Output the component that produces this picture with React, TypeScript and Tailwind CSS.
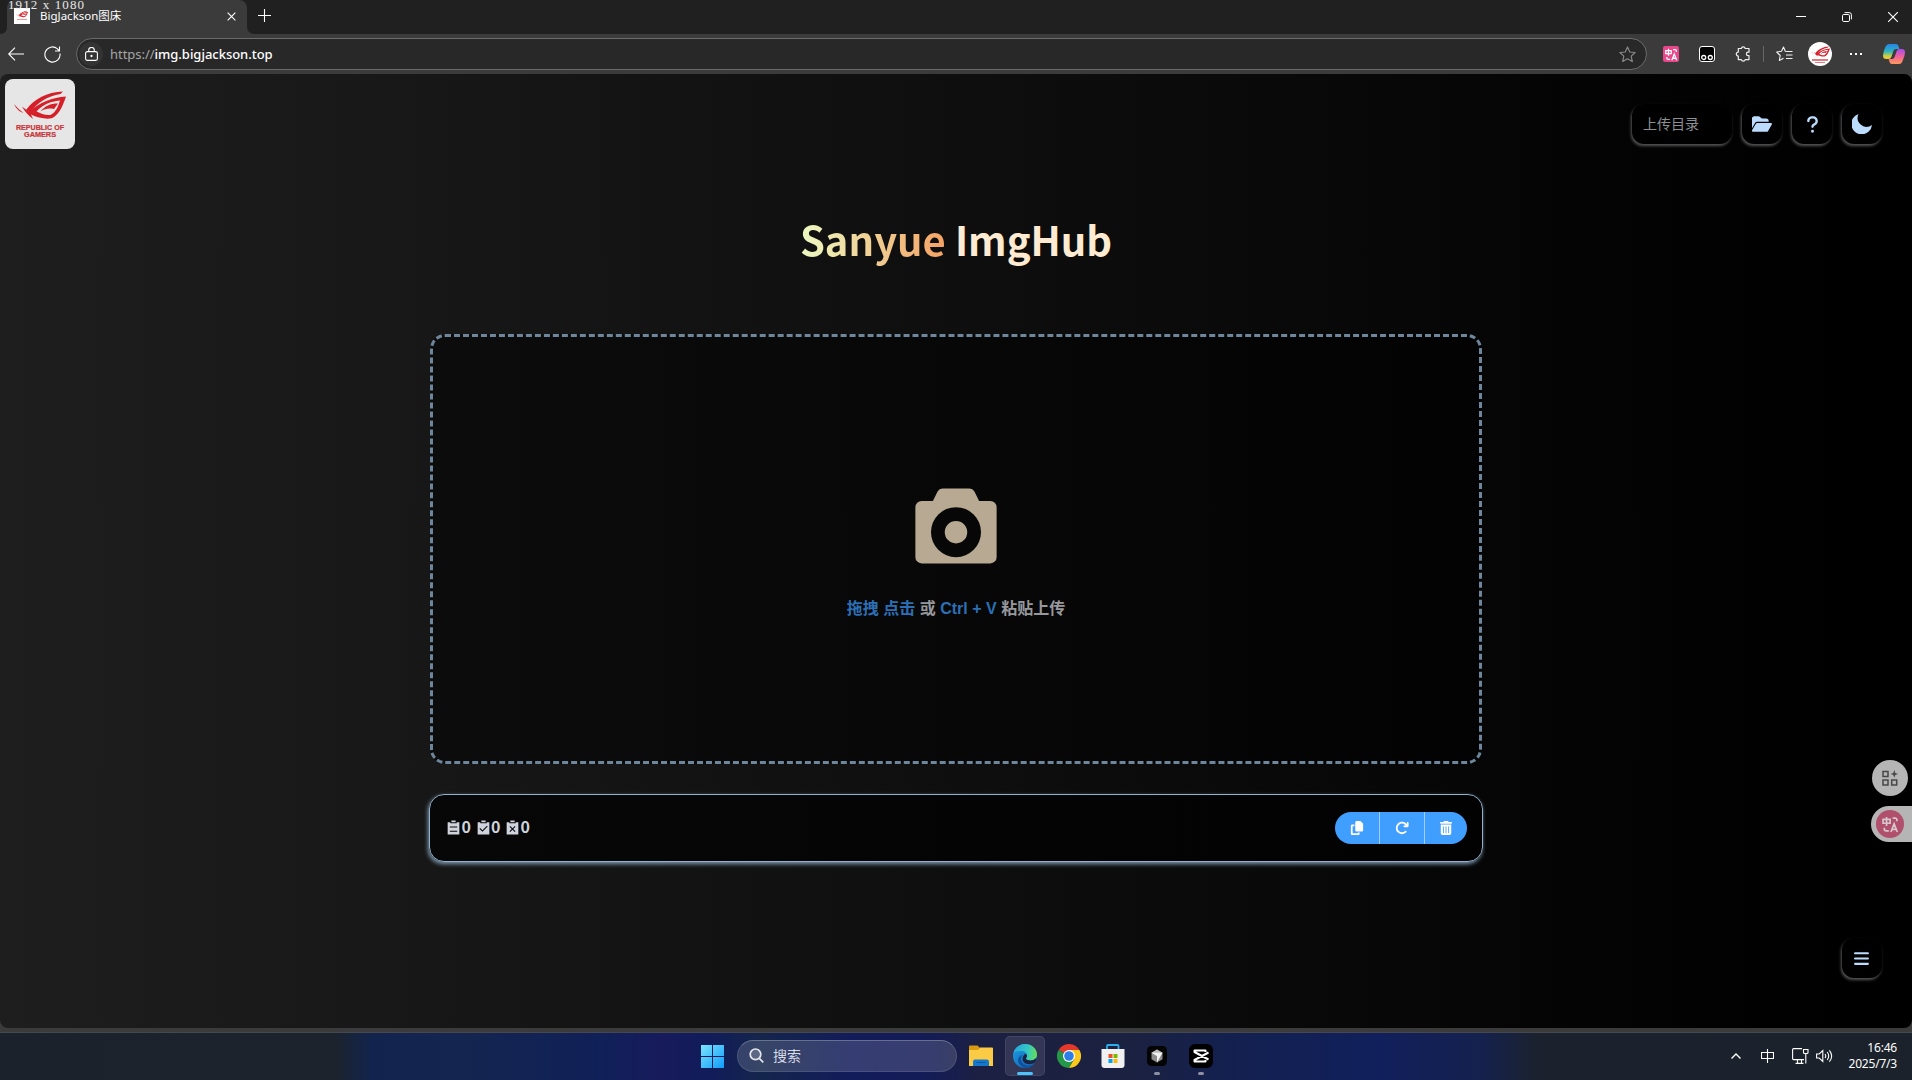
import React from "react";
import { FaCopy, FaArrowRotateRight, FaTrashCan, FaFolderOpen, FaQuestion, FaBars } from "react-icons/fa6";

type IconProps = { className?: string };

function RogEye({ className }: IconProps) {
  return (
    <svg viewBox="0 0 52 28" className={className} fill="#d5202a">
      <path d="M49 0.500C33 1 20 8 12 19L16 22C23 12 33 5 46.500 3Z" />
      <path fillRule="evenodd" d="M52 5.500C38 6.500 26 11 15 21L8 15.500Q12 23 19 28L17 23.500C24 27 36 29.500 40 26C46 22 49 14 52 5.500ZM46 9.500C44 16 42 21 36.500 24C31 24.500 27 22.500 22.500 20.500C29 13.500 36 10.500 46 9.500Z" />
      <path d="M44 12.500C36 12.500 31 15 26.500 20.500C31 17.500 35 17 40 18Z" />
      <path d="M0 13Q3 20 9.500 22Q4 18 0 13Z" />
    </svg>
  );
}

function RogBadge() {
  return (
    <div className="flex size-[70px] flex-col items-center rounded-lg bg-[#e6e6e6] pt-3">
      <RogEye className="h-7 w-[52px]" />
      <svg viewBox="0 0 50 14" className="mt-1.5 h-3.5 w-[50px]" fill="#c9343a" stroke="#c9343a" strokeWidth=".2" fontFamily="Liberation Sans" fontWeight="700" fontSize="6.6">
        <text x="1" y="5.4" textLength="48" lengthAdjust="spacingAndGlyphs">REPUBLIC OF</text>
        <text x="9" y="11.6" textLength="32" lengthAdjust="spacingAndGlyphs">GAMERS</text>
      </svg>
    </div>
  );
}

function TranslateGlyph({ className }: IconProps) {
  return (
    <svg viewBox="0 0 16 16" className={className} fill="none" stroke="currentColor" strokeWidth="1.6">
      <path d="M1 3.2h6.6v3.6H1zM4.3 1v8.4M10 2h2.6q1.4 0 1.4 1.6V5M2.2 11v1.2q0 1.8 1.8 1.8h2.4M8.4 15l3-7.6 3 7.6M9.4 12.6h4" />
    </svg>
  );
}

function TabStrip() {
  return (
    <div className="flex h-[34px] bg-[#202020] text-white">
      <div className="relative ml-[7px] flex w-60 items-center rounded-t-lg bg-[#3b3b3b] pr-[11px] pl-[7px]">
        <span className="absolute -top-[2px] left-[1px] font-['Liberation_Serif',serif] text-[13px] leading-[13px] tracking-[1.1px] whitespace-pre text-[#e8e8e8]">1912 x 1080</span>
        <span className="mt-[-2px] flex size-4 flex-col items-center bg-white pt-[2px]">
          <RogEye className="h-[8px] w-3" />
          <span className="mt-[1px] h-px w-2.5 bg-[#e79a9a]" />
        </span>
        <span className="mt-[-3px] ml-[10px] text-[11.5px]">BigJackson图床</span>
        <svg viewBox="0 0 10 10" className="mt-[-1px] ml-auto size-[9px] text-white" stroke="currentColor" strokeWidth="1.2">
          <path d="M.7.7l8.6 8.6M9.3.7L.7 9.3" />
        </svg>
        <svg viewBox="0 0 8 8" className="absolute -left-[7px] bottom-0 size-[7px]" fill="#3b3b3b"><path d="M8 0v8H0Q8 8 8 0Z" /></svg>
        <svg viewBox="0 0 8 8" className="absolute -right-2 bottom-0 size-2" fill="#3b3b3b"><path d="M0 0v8h8Q0 8 0 0Z" /></svg>
      </div>
      <svg viewBox="0 0 13 13" className="mt-[9px] ml-[11px] size-[13px]" stroke="#fff" strokeWidth="1.1"><path d="M6.500 0v13M0 6.500h13" /></svg>
      <div className="ml-auto flex items-center gap-9 pr-[14px]">
        <svg viewBox="0 0 10 10" className="size-[10px]" stroke="#fff"><path d="M0 4.5h10" /></svg>
        <svg viewBox="0 0 10 10" className="size-[10px]" fill="none" stroke="#fff"><rect x=".5" y="2.5" width="7" height="7" rx="1.3" /><path d="M2.6.6h4.6q2.2 0 2.2 2.2v4.6" /></svg>
        <svg viewBox="0 0 10 10" className="size-[10px]" stroke="#fff" strokeWidth="1.1"><path d="M0 0l10 10M10 0L0 10" /></svg>
      </div>
    </div>
  );
}

function Copilot() {
  return (
    <svg viewBox="0 0 22 20" className="h-5 w-[22px]">
      <defs>
        <linearGradient id="cpA" x1="0" y1="0" x2="0" y2="1"><stop stopColor="#2483e8" /><stop offset=".5" stopColor="#2fb4c0" /><stop offset=".8" stopColor="#c9d043" /><stop offset="1" stopColor="#f6c52f" /></linearGradient>
        <linearGradient id="cpB" x1="0" y1="0" x2="0" y2="1"><stop stopColor="#a64df0" /><stop offset=".5" stopColor="#f0609c" /><stop offset="1" stopColor="#ff9a57" /></linearGradient>
      </defs>
      <path d="M6 0h7q2 0 2.5 2l.8 3H13q-2 0-2.6 2L8.300 13q-.7 2-2.600 2H3q-3 0-3-3.500Q0 8 2.600 2.600 3.700 0 6 0Z" fill="url(#cpA)" />
      <path d="M16 20H9q-2 0-2.500-2l-.8-3H9q2 0 2.600-2L13.700 7q.7-2 2.600-2H19q3 0 3 3.500 0 3.500-2.600 8.900Q18.300 20 16 20Z" fill="url(#cpB)" />
    </svg>
  );
}

function Toolbar() {
  return (
    <div className="flex h-10 items-center bg-[#3b3b3b] text-white">
      <svg viewBox="0 0 16 14" className="mt-[-1px] ml-2 h-[14px] w-4" fill="none" stroke="#fff" strokeWidth="1.1"><path d="M16 7H.8M7 .6L.7 7 7 13.400" /></svg>
      <svg viewBox="0 0 17 17" className="ml-5 size-[17px]" fill="none" stroke="#fff" strokeWidth="1.1"><path d="M16 7.500A7.600 7.600 0 1 1 13.200 2.600L15.500 5M15.500 .5V5H11" /></svg>
      <div className="ml-[15px] flex h-8 w-[1571px] items-center rounded-full border border-[#6b6b6b] bg-[#282828] pr-[10px] pl-[2px]">
        <span className="flex size-6 items-center justify-center rounded-full bg-[#333]">
          <svg viewBox="0 0 13 14" className="h-[14px] w-[13px]" fill="none" stroke="#fff" strokeWidth="1.100"><rect x=".6" y="4.600" width="11.800" height="8.800" rx="1.600" /><path d="M3.700 4.600V3.200a2.800 2.700 0 0 1 5.600 0v1.400" /><circle cx="6.500" cy="9" r=".6" fill="#fff" /></svg>
        </span>
        <span className="mt-px ml-[7px] text-[13px] font-medium tracking-[-0.030px] text-white"><span className="font-normal text-[#a5a5a5]">https://</span>img.bigjackson.top</span>
        <svg viewBox="0 0 18 18" className="ml-auto size-[17px]" fill="none" stroke="#8a8a8a" strokeWidth="1.200" strokeLinejoin="round"><path d="M9 1l2.400 5.300 5.700.6-4.200 3.900 1.200 5.700L9 13.600l-5.100 2.900 1.200-5.700L.9 6.900l5.700-.6Z" /></svg>
      </div>
      <span className="ml-4 flex size-4 items-center justify-center rounded-xs bg-[#e8478b]"><TranslateGlyph className="size-[13px]" /></span>
      <svg viewBox="0 0 16 16" className="ml-5 size-4"><rect x=".5" y=".5" width="15" height="15" rx="2.500" fill="#000" stroke="#fff" /><circle cx="4.700" cy="11.500" r="2" fill="none" stroke="#fff" strokeWidth="1.300" /><circle cx="11.300" cy="11.500" r="2" fill="none" stroke="#fff" strokeWidth="1.300" /></svg>
      <svg viewBox="0 0 16 16" className="ml-5 size-4" fill="none" stroke="#f0f0f0" strokeWidth="1.200" strokeLinejoin="round"><path d="M3.300 2.500h3A2 2 0 0 1 10.200 2.500h3.800v3.700h-.9a1.700 1.700 0 0 0 0 3.400h.9v4H10.200a2 2 0 0 1-3.900 0H3.300v-3.500a2 2 0 0 1 0-4Z" /></svg>
      <span className="ml-[12px] h-4 w-px bg-[#666]" />
      <svg viewBox="0 0 17 16" className="ml-3 h-4 w-[17px]" fill="none" stroke="#f0f0f0" strokeWidth="1.100" strokeLinejoin="round"><path d="M10.500 5.500L9.300 5.300 7.500 1 5.500 5.300.7 6l3.500 3.500-.9 5 4.200-2.300M10.500 5.500h6M10 9h6.500M10 12.500h6.500" /></svg>
      <span className="ml-[15px] flex size-6 flex-col items-center rounded-full bg-white pt-1"><RogEye className="h-[11px] w-[19px]" /><span className="mt-[2px] h-[2px] w-4 bg-[#e37a80]" /><span className="mt-px h-px w-2.5 bg-[#e37a80]" /></span>
      <span className="ml-[18px] flex gap-[3px]"><i className="size-[2px] bg-white" /><i className="size-[2px] bg-white" /><i className="size-[2px] bg-white" /></span>
      <span className="ml-[21px]"><Copilot /></span>
    </div>
  );
}

function GlowButton({ children }: { children: React.ReactNode }) {
  return <button className="flex size-10 items-center justify-center rounded-xl bg-black text-[#bcdcfd] shadow-[-1px_2px_3px_#555]">{children}</button>;
}

const stats = [
  "M704 192h160v736H160V192h160v64h384v-64zM288 512h448v-64H288v64zm0 256h448v-64H288v64zm96-576V96h256v96H384z",
  "M704 192h160v736H160V192h160.064v64H704v-64zM311.616 537.28l-45.312 45.248L447.36 763.52l316.8-316.8-45.312-45.184L447.36 673.024 311.616 537.28zM384 192V96h256v96H384z",
  "m557.248 608 135.744-135.744-45.248-45.248-135.68 135.744-135.808-135.68-45.248 45.184L466.752 608l-135.68 135.68 45.184 45.312L512 653.248l135.744 135.744 45.248-45.248L557.312 608zM704 192h160v736H160V192h160v64h384v-64zm-320 0V96h256v96H384z",
];

function Page() {
  return (
    <div className="bg-[#3b3b3b]">
      <main className="relative h-[954px] overflow-hidden rounded-lg bg-[linear-gradient(90deg,#1e1e1e,#000_96%)]">
        <header className="flex h-[126px] items-start justify-between pt-[5px] pr-[30px] pl-[5px]">
          <RogBadge />
          <div className="mt-[25px] flex gap-[10px]">
            <div className="flex h-10 w-[100px] items-center rounded-xl bg-black pb-[2px] pl-[11px] text-[14px] text-[#8d9095] shadow-[-1px_2px_3px_#555]">上传目录</div>
            <GlowButton><FaFolderOpen className="size-5" /></GlowButton>
            <GlowButton><FaQuestion className="size-[19px]" /></GlowButton>
            <GlowButton><svg viewBox="0 0 20 20" className="size-5" fill="currentColor"><path d="M6.500 0A10.400 10.400 0 1 0 20 11 9 9 0 0 1 6.500 0Z" /></svg></GlowButton>
          </div>
        </header>
        <h1 className="h-[134px] pt-[7px] text-center font-['Noto_Sans_CJK_SC',sans-serif] text-[40px] leading-[64px] font-bold text-[#ffebd2]">
          <span className="bg-[linear-gradient(90deg,#ecfac2,#f5a263)] bg-clip-text text-transparent">Sanyue</span> ImgHub
        </h1>
        <section className="mx-auto flex h-[430px] w-[1052px] flex-col items-center rounded-[15px] border-[3px] border-dashed border-[#6d869c] bg-black/45 pt-[142px]">
          <svg viewBox="0 0 1024 1024" className="size-[100px]" fill="#b8a993"><path d="M160 224a64 64 0 0 0-64 64v512a64 64 0 0 0 64 64h704a64 64 0 0 0 64-64V288a64 64 0 0 0-64-64H748.416l-46.464-92.672A64 64 0 0 0 644.736 96H379.328a64 64 0 0 0-57.216 35.392L275.776 224H160zm352 435.2a115.2 115.2 0 1 0 0-230.4 115.2 115.2 0 0 0 0 230.4zm0 140.8a256 256 0 1 1 0-512 256 256 0 0 1 0 512z" /></svg>
          <p className="mt-[18px] font-['Liberation_Sans','Noto_Sans_CJK_SC',sans-serif] text-[16px] leading-6 font-bold text-[#97989d]"><span className="text-[#2c6fb5]">拖拽 点击</span> 或 <span className="text-[#2c6fb5]">Ctrl + V</span> 粘贴上传</p>
        </section>
        <section className="mx-auto mt-[30px] flex h-[68px] w-[1054px] items-center justify-between rounded-[15px] border border-[#93b1cb] bg-[linear-gradient(90deg,#070707,#020202)] pr-[15px] pl-[15px] shadow-[-1px_2px_4px_#7f9ab2]">
          <div className="flex gap-[3px] pb-[2px] font-['Noto_Sans_CJK_SC',sans-serif] text-[16px] leading-5 font-bold text-[#cfd3dc]">
            {stats.map((d) => (
              <span key={d} className="flex w-[26.500px] items-center"><svg viewBox="0 0 1024 1024" className="size-[17px] shrink-0" fill="currentColor"><path d={d} /></svg><span className="mt-[-2px] ml-[-0.500px]">0</span></span>
            ))}
          </div>
          <div className="flex h-8 w-[132px] overflow-hidden rounded-full bg-[#409eff] text-white">
            <button className="flex w-[45px] items-center justify-center border-r border-[#a0cfff]"><FaCopy className="size-[14px]" /></button>
            <button className="flex w-[45px] items-center justify-center border-r border-[#a0cfff]"><FaArrowRotateRight className="size-[14px]" /></button>
            <button className="flex w-[42px] items-center justify-center"><FaTrashCan className="size-[14px]" /></button>
          </div>
        </section>
        <div className="absolute top-[686px] right-0 flex flex-col items-end gap-[10px]">
          <div className="mr-1 flex size-9 items-center justify-center rounded-full bg-[#b5b5b5]">
            <svg viewBox="0 0 16 16" className="size-4" fill="none" stroke="#484848" strokeWidth="1.500"><path d="M1 1.500h5v5H1zM1 10h5v5H1zM9.700 10h5v5h-5z" /><path d="M12.300 0l1 2.900 2.700 1-2.700 1-1 2.800-1-2.800-2.700-1 2.700-1Z" fill="#484848" stroke="none" /></svg>
          </div>
          <div className="flex h-9 w-[41px] items-center rounded-l-full bg-[#b5b5b5] pl-[5px]">
            <span className="flex size-7 items-center justify-center rounded-full bg-[#b0506c] text-[#d5c8cc]"><TranslateGlyph className="size-[17px]" /></span>
          </div>
        </div>
        <div className="absolute right-[30px] bottom-[50px]"><GlowButton><FaBars className="mr-px size-[17px]" /></GlowButton></div>
      </main>
      <div className="h-[5px] border-b border-[#46484f]" />
    </div>
  );
}

function Edge() {
  return (
    <svg viewBox="0 0 24 24" className="size-6">
      <defs>
        <linearGradient id="eA" x1="0" y1=".3" x2="1" y2=".4"><stop stopColor="#2aa4dc" /><stop offset=".6" stopColor="#33c7c5" /><stop offset="1" stopColor="#66dd58" /></linearGradient>
        <linearGradient id="eB" x1="0" y1="0" x2="1" y2="1"><stop stopColor="#1b9de2" /><stop offset="1" stopColor="#1161b5" /></linearGradient>
      </defs>
      <circle cx="12" cy="12" r="12" fill="url(#eB)" />
      <path d="M.4 9.500C1.600 4 6.300 0 12 0c7 0 12 5 12 10.500 0 3.500-2.600 6-6.500 6-2.500 0-4.500-.8-4.500-2 0-.8 1-1.200 1-3C14 8.700 11.400 7 8.200 7 4.700 7 1.600 8 .4 9.500Z" fill="url(#eA)" />
      <path d="M9.500 11C7 13 7.500 18 11 20.300c3.500 2.400 8 1.500 11.200-2.100C20 22 16.500 24 12.500 24 8 23 5 19.500 5 16c0-2.500 2-4.600 4.500-5Z" fill="#12519d" />
      <path d="M13 14.500c0 1.200 2 2 4.500 2 2.700 0 4.600-1 5.700-2.700.5 1.800-.3 4-1.500 5-2.700 1.700-6.700 1.900-9.700.4C8.500 16.800 9 12.500 12 10c1.500 0 2 .9 2 1.700 0 1.600-1 2-1 2.800Z" fill="#1c2342" />
    </svg>
  );
}

function Chrome() {
  return (
    <svg viewBox="0 0 24 24" className="size-6">
      <path d="M12 12L1.600 6A12 12 0 0 1 22.400 6Z" fill="#e3382c" />
      <path d="M12 12L1.600 6A12 12 0 0 0 12 24l5-9Z" fill="#249848" />
      <path d="M12 6H22.400A12 12 0 0 1 12 24l5.200-9Z" fill="#fdc81c" />
      <circle cx="12" cy="12" r="6" fill="#fff" /><circle cx="12" cy="12" r="4.800" fill="#2f7de9" />
    </svg>
  );
}

function TaskItem({ children, active, running }: { children: React.ReactNode; active?: boolean; running?: boolean }) {
  return (
    <div className={active ? "relative mx-[2px] flex size-10 items-center justify-center rounded-[5px] border border-white/8 bg-white/10" : "relative mx-[2px] flex size-10 items-center justify-center"}>
      {children}
      {active && <i className="absolute bottom-0 h-[3px] w-4 rounded-full bg-[#4cc2ff]" />}
      {running && <i className="absolute bottom-px h-[3px] w-[6px] rounded-full bg-[#8d90a3]" />}
    </div>
  );
}

function Taskbar() {
  return (
    <footer className="relative flex h-[47px] items-start justify-center bg-[linear-gradient(90deg,#1c222c_0,#1c232d_335px,#12244e_372px,#14254f_460px,#102058_600px,#171b5c_660px,#111c5a_710px,#14254c_760px,#121c5a_850px,#141c56_930px,#1c2042_980px,#1b2140_1130px,#13204f_1230px,#111f5c_1380px,#15214e_1480px,#1b222d_1540px,#1b222c_1912px)] pt-[3px] text-white">
      <div className="ml-3 flex items-center">
        <svg viewBox="0 0 23 23" className="mr-[13px] size-[23px]">
          <defs><linearGradient id="win" x1="0" y1="0" x2="1" y2="1"><stop stopColor="#7be5fb" /><stop offset="1" stopColor="#109bfa" /></linearGradient></defs>
          <path d="M0 0h11v11H0zM12 0h11v11H12zM0 12h11v11H0zM12 12h11v11H12z" fill="url(#win)" />
        </svg>
        <div className="mr-[2px] flex h-8 w-[220px] items-center rounded-full border border-white/10 border-t-white/25 bg-white/15 pb-px pl-[11px] text-[14px] text-[#d6d9e6]">
          <svg viewBox="0 0 15 15" className="mr-[9px] size-[15px]" fill="#ffffff30" stroke="#e4e6ee" strokeWidth="1.700"><circle cx="6.500" cy="6.300" r="5.300" /><path d="M10.300 10.400l4 4" /></svg>
          搜索
        </div>
        <TaskItem>
          <svg viewBox="0 0 24 22" className="h-[22px] w-6"><path d="M0 1.500Q0 .5 1 .5h7.500l2 2V6H0Z" fill="#d99a12" /><path d="M0 5h9l2-2.500h12q1 0 1 1V21H0Z" fill="#fccb45" /><path d="M4 21v-4.500Q4 14.500 6 14.500h12q2 0 2 2V21Z" fill="#1678cb" /><path d="M7.500 17.500h9" stroke="#0c58a0" /></svg>
        </TaskItem>
        <TaskItem active><Edge /></TaskItem>
        <TaskItem><Chrome /></TaskItem>
        <TaskItem>
          <svg viewBox="0 0 24 24" className="size-6"><path d="M6 6V2q0-1 1-1h9.500q1 0 1 1v4" fill="none" stroke="#2caeea" strokeWidth="1.800" /><path d="M.5 5h23v16q0 3-3 3h-17q-3 0-3-3Z" fill="#f1f1f1" /><path d="M7.500 10h4v4h-4z" fill="#f04e24" /><path d="M12.500 10h4v4h-4z" fill="#7db900" /><path d="M7.500 15h4v4h-4z" fill="#04a2ec" /><path d="M12.500 15h4v4h-4z" fill="#fdb803" /></svg>
        </TaskItem>
        <TaskItem running>
          <svg viewBox="0 0 20 20" className="size-5"><rect width="20" height="20" rx="4.500" fill="#040404" /><path d="M10 3.500l5.500 3.200v6.500L10 16.500l-5.500-3.300V6.700Z" fill="#8c8c8c" /><path d="M4.500 6.700L10 3.500l5.500 3.200L10 10Z" fill="#bbb" /><path d="M15.500 6.700L10 16.500V10L4.500 6.700Z" fill="#f2f2f2" /></svg>
        </TaskItem>
        <TaskItem running>
          <svg viewBox="0 0 24 24" className="size-6"><rect width="24" height="24" rx="6" fill="#000" /><path d="M19.500 8.500L5.500 16v1.500h11V16M19.500 15.500L5.500 8V6.500h11V8" fill="none" stroke="#fff" strokeWidth="2" strokeLinejoin="round" /></svg>
        </TaskItem>
      </div>
      <div className="absolute top-0 right-[15px] flex h-[45px] items-center">
        <svg viewBox="0 0 10 6" className="mr-5 h-[6px] w-[10px]" fill="none" stroke="#fff" strokeWidth="1.400"><path d="M.5 5.500L5 1l4.500 4.500" /></svg>
        <svg viewBox="0 0 13 14" className="mr-[18px] h-[14px] w-[13px]" fill="none" stroke="#fff" strokeWidth="1.100"><path d="M.5 3.500h12v6H.5zM6.500 0v14" /></svg>
        <svg viewBox="0 0 17 16" className="mr-[7px] h-4 w-[17px]" fill="none" stroke="#fff" strokeWidth="1.100"><path d="M10 .6H1.600Q.6.600.6 1.600v9q0 1 1 1H12M3.500 15.400h8M5.500 12v3.400M9.500 12v3.400M11.500 1.500h4.500v3q0 1-1 1h-2.500q-1 0-1-1zM13.800 5.500v10" /></svg>
        <svg viewBox="0 0 17 14" className="mr-[14px] h-[14px] w-[17px]" fill="none" stroke="#fff" strokeWidth="1.100"><path d="M.6 5v4h2.600l3.600 3.400V1.600L3.200 5ZM9 5q1.500 2 0 4M11.200 3q3 4 0 8M13.400 1.300q4.500 5.700 0 11.400" /></svg>
        <div className="w-[50px] text-right text-[12px] leading-4 tracking-[-0.200px] whitespace-nowrap">16:46<br />2025/7/3</div>
      </div>
    </footer>
  );
}

export default function App() {
  return (
    <div className="h-[1080px] w-[1912px] overflow-hidden bg-black font-['Noto_Sans','Noto_Sans_CJK_SC',sans-serif]">
      <TabStrip />
      <Toolbar />
      <Page />
      <Taskbar />
    </div>
  );
}
